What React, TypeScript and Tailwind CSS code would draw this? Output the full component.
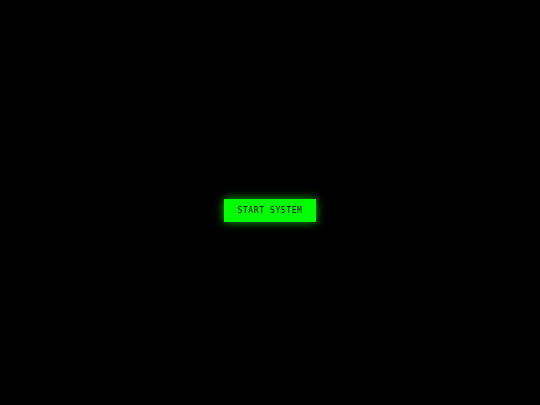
export default function App() {
  return (
    <div className="flex h-[405px] w-[540px] items-center justify-center bg-black">
      <button className="mt-[16px] flex h-[23px] w-[92px] items-center justify-center bg-[#00ff00] font-['DejaVu_Sans_Mono',monospace] text-[8px] tracking-[0.6px] text-black shadow-[0_0_10px_rgba(0,255,0,0.7)]">
        START SYSTEM
      </button>
    </div>
  );
}
